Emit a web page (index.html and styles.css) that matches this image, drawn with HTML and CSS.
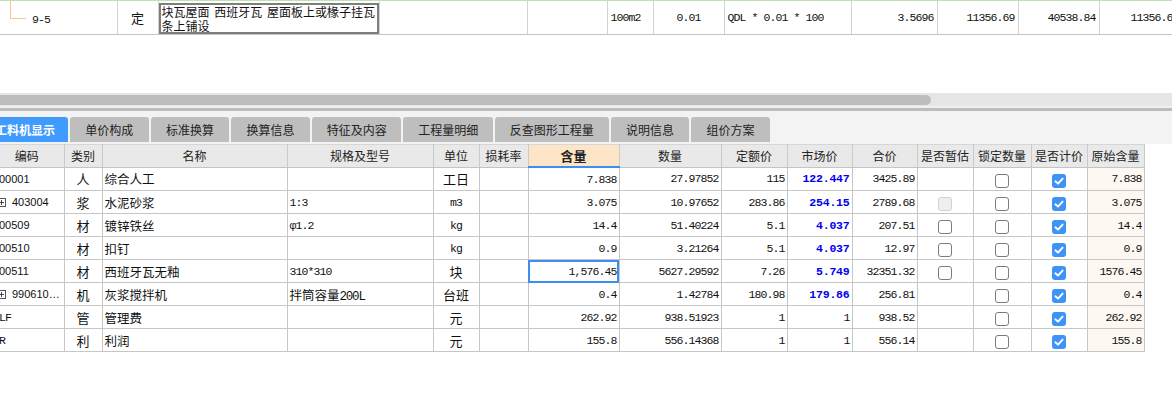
FILE: index.html
```html
<!DOCTYPE html>
<html lang="zh-CN">
<head>
<meta charset="utf-8">
<title>工料机显示</title>
<link rel="stylesheet" href="styles.css">
</head>
<body>
<div class="page">
  <table class="tgrid">
    <colgroup>
      <col style="width:117px"><col style="width:41px"><col style="width:221px"><col style="width:148px">
      <col style="width:80px"><col style="width:46px"><col style="width:71px"><col style="width:127px">
      <col style="width:86px"><col style="width:81px"><col style="width:81px"><col style="width:83px">
    </colgroup>
    <tr>
      <td class="treecell"><div class="tree"><span class="branch"></span><span class="code m">9-5</span></div></td>
      <td class="c cj">定</td>
      <td class="editcell"><div class="editbox"><div class="eline">块瓦屋面 西班牙瓦 屋面板上或椽子挂瓦</div><div class="eline">条上铺设</div></div></td>
      <td></td>
      <td></td>
      <td class="m">100m2</td>
      <td class="m c">0.01</td>
      <td class="m">QDL * 0.01 * 100</td>
      <td class="m r">3.5696</td>
      <td class="m r">11356.69</td>
      <td class="m r">40538.84</td>
      <td class="m r">11356.69</td>
    </tr>
  </table>

  <div class="hscroll"><div class="thumb"></div></div>
  <div class="hsep"></div>

  <div class="tabbar">
    <div class="tab active">工料机显示</div>
    <div class="tab">单价构成</div>
    <div class="tab">标准换算</div>
    <div class="tab">换算信息</div>
    <div class="tab wide">特征及内容</div>
    <div class="tab wide">工程量明细</div>
    <div class="tab wide">反查图形工程量</div>
    <div class="tab">说明信息</div>
    <div class="tab">组价方案</div>
  </div>

  <table class="grid">
    <colgroup>
      <col style="width:74px"><col style="width:38px"><col style="width:185px"><col style="width:146px">
      <col style="width:46px"><col style="width:49px"><col style="width:91px"><col style="width:102px">
      <col style="width:66px"><col style="width:65px"><col style="width:65px"><col style="width:56px">
      <col style="width:58px"><col style="width:56px"><col style="width:57px">
    </colgroup>
    <thead>
      <tr>
        <th class="h-code">编码</th><th>类别</th><th>名称</th><th>规格及型号</th><th>单位</th><th>损耗率</th>
        <th class="h-sel">含量</th><th>数量</th><th>定额价</th><th>市场价</th><th>合价</th>
        <th>是否暂估</th><th>锁定数量</th><th>是否计价</th><th>原始含量</th>
      </tr>
    </thead>
    <tbody>
      <tr>
        <td class="code-c sans">00001</td><td class="c cat">人</td><td class="name">综合人工</td><td class="spec"></td><td class="c cat">工日</td><td></td>
        <td class="m r">7.838</td><td class="m r">27.97852</td><td class="m r">115</td><td class="m r blue">122.447</td><td class="m r">3425.89</td>
        <td class="c"></td><td class="c"><span class="cb"></span></td><td class="c"><span class="cb on"></span></td><td class="m r orig">7.838</td>
      </tr>
      <tr>
        <td class="code-c sans"><span class="exp"></span>403004</td><td class="c cat">浆</td><td class="name">水泥砂浆</td><td class="spec m">1:3</td><td class="c m">m3</td><td></td>
        <td class="m r">3.075</td><td class="m r">10.97652</td><td class="m r">283.86</td><td class="m r blue">254.15</td><td class="m r">2789.68</td>
        <td class="c"><span class="cb dis"></span></td><td class="c"><span class="cb"></span></td><td class="c"><span class="cb on"></span></td><td class="m r orig">3.075</td>
      </tr>
      <tr>
        <td class="code-c sans">00509</td><td class="c cat">材</td><td class="name">镀锌铁丝</td><td class="spec m">φ1.2</td><td class="c m">kg</td><td></td>
        <td class="m r">14.4</td><td class="m r">51.40224</td><td class="m r">5.1</td><td class="m r blue">4.037</td><td class="m r">207.51</td>
        <td class="c"><span class="cb"></span></td><td class="c"><span class="cb"></span></td><td class="c"><span class="cb on"></span></td><td class="m r orig">14.4</td>
      </tr>
      <tr>
        <td class="code-c sans">00510</td><td class="c cat">材</td><td class="name">扣钉</td><td class="spec"></td><td class="c m">kg</td><td></td>
        <td class="m r">0.9</td><td class="m r">3.21264</td><td class="m r">5.1</td><td class="m r blue">4.037</td><td class="m r">12.97</td>
        <td class="c"><span class="cb"></span></td><td class="c"><span class="cb"></span></td><td class="c"><span class="cb on"></span></td><td class="m r orig">0.9</td>
      </tr>
      <tr>
        <td class="code-c sans">00511</td><td class="c cat">材</td><td class="name">西班牙瓦无釉</td><td class="spec m">310*310</td><td class="c cat">块</td><td></td>
        <td class="m r selected">1,576.45</td><td class="m r">5627.29592</td><td class="m r">7.26</td><td class="m r blue">5.749</td><td class="m r">32351.32</td>
        <td class="c"><span class="cb"></span></td><td class="c"><span class="cb"></span></td><td class="c"><span class="cb on"></span></td><td class="m r orig">1576.45</td>
      </tr>
      <tr>
        <td class="code-c sans"><span class="exp"></span>990610…</td><td class="c cat">机</td><td class="name">灰浆搅拌机</td><td class="spec">拌筒容量<span class="m big">200L</span></td><td class="c cat">台班</td><td></td>
        <td class="m r">0.4</td><td class="m r">1.42784</td><td class="m r">180.98</td><td class="m r blue">179.86</td><td class="m r">256.81</td>
        <td class="c"></td><td class="c"><span class="cb"></span></td><td class="c"><span class="cb on"></span></td><td class="m r orig">0.4</td>
      </tr>
      <tr>
        <td class="code-c m">LF</td><td class="c cat">管</td><td class="name">管理费</td><td class="spec"></td><td class="c cat">元</td><td></td>
        <td class="m r">262.92</td><td class="m r">938.51923</td><td class="m r">1</td><td class="m r">1</td><td class="m r">938.52</td>
        <td class="c"></td><td class="c"><span class="cb"></span></td><td class="c"><span class="cb on"></span></td><td class="m r orig">262.92</td>
      </tr>
      <tr>
        <td class="code-c m">R</td><td class="c cat">利</td><td class="name">利润</td><td class="spec"></td><td class="c cat">元</td><td></td>
        <td class="m r">155.8</td><td class="m r">556.14368</td><td class="m r">1</td><td class="m r">1</td><td class="m r">556.14</td>
        <td class="c"></td><td class="c"><span class="cb"></span></td><td class="c"><span class="cb on"></span></td><td class="m r orig">155.8</td>
      </tr>
    </tbody>
  </table>
</div>
</body>
</html>
```

FILE: styles.css
```css
html, body {
  margin: 0;
  padding: 0;
  background: #ffffff;
}
body {
  width: 1172px;
  height: 413px;
  overflow: hidden;
  font-family: "Noto Sans CJK SC", "Noto Sans", sans-serif;
  font-size: 12px;
  color: #111;
}
.page {
  width: 1172px;
  overflow: hidden;
}

/* generic cell helpers */
.m {
  font-family: "Liberation Mono", "Noto Sans CJK SC", monospace;
  font-size: 11.5px;
  letter-spacing: -0.9px;
}
.sans {
  font-family: "Liberation Sans", sans-serif;
  font-size: 11px;
}
.c { text-align: center; }
.r { text-align: right; }
.cj { font-size: 13px; }

/* ---------- top grid row ---------- */
.tgrid {
  border-collapse: collapse;
  table-layout: fixed;
  width: 1182px;
  border-top: 1px solid #bfe2b1;
}
.tgrid td {
  height: 33px;
  padding: 0 3px;
  border-left: 1px solid #d2d2d2;
  border-right: 1px solid #d2d2d2;
  border-bottom: 1px solid #c4c4c4;
  vertical-align: middle;
  white-space: nowrap;
  overflow: hidden;
}
.tgrid td:first-child { border-left: none; }
.tgrid .treecell {
  padding: 0;
  vertical-align: top;
}
.tree {
  display: flex;
  align-items: flex-start;
  height: 33px;
}
.branch {
  width: 15px;
  height: 17px;
  margin-left: 10px;
  border-left: 1px solid #f6c98c;
  border-bottom: 1px solid #f6c98c;
}
.code {
  margin-top: 12px;
  margin-left: 6px;
}
.tgrid .editcell {
  padding: 0;
  vertical-align: top;
}
.editbox {
  box-sizing: border-box;
  height: 31px;
  margin-top: 2px;
  border: 2px solid #7e7e7e;
  padding: 0 1px;
  font-size: 12px;
  word-spacing: 2px;
  white-space: nowrap;
  overflow: hidden;
  background: #fff;
}
.eline {
  height: 13.5px;
  line-height: 14px;
}

/* ---------- horizontal scroll ---------- */
.hscroll {
  margin-top: 58px;
  height: 15px;
  box-sizing: border-box;
  padding-top: 2px;
  background: #e6e6e6;
  border-bottom: 2px solid #f0f0f0;
}
.thumb {
  width: 931px;
  height: 10px;
  background: #bdbdbd;
  border-radius: 0 6px 6px 0;
}
.hsep {
  height: 3px;
  background: #bdbdbd;
}

/* ---------- tabs ---------- */
.tabbar {
  display: flex;
  align-items: flex-end;
  gap: 2px;
  height: 33px;
  box-sizing: border-box;
  padding: 6px 0 2px 0;
  margin-left: -20px;
  background: #f3f3f3;
}
.tab {
  height: 25px;
  line-height: 25px;
  padding: 0 15.3px;
  background: #bebebe;
  color: #222;
  font-size: 12px;
  border-radius: 3px 3px 0 0;
  white-space: nowrap;
}
.tab.wide {
  padding: 0 14.8px;
}
.tab.active {
  background: #3f9bfd;
  color: #fff;
  font-weight: bold;
  font-size: 12px;
  padding: 0 13px 0 15px;
}

/* ---------- main grid ---------- */
.grid {
  border-collapse: collapse;
  table-layout: fixed;
  width: 1154px;
  margin-left: -10px;
}
.grid th {
  height: 21px;
  padding: 0;
  background: #e9e9e9;
  border-top: 1px solid #d6d6d6;
  border-right: 1px solid #cacaca;
  border-bottom: 1px solid #c4c4c4;
  font-weight: normal;
  font-size: 12px;
  color: #222;
  text-align: center;
  white-space: nowrap;
  overflow: hidden;
}
.grid th.h-sel {
  background: #fde5c7;
  font-weight: bold;
  font-size: 13px;
  border-bottom: 2px solid #3d8ef0;
}
.grid td {
  height: 22px;
  padding: 0 3px;
  border: 1px solid #c6c6c6;
  white-space: nowrap;
  overflow: hidden;
  vertical-align: middle;
}
.grid td:first-child { border-left: none; }
.grid td.code-c {
  padding-left: 9px;
}
.grid td.cat {
  font-size: 13px;
}
.grid td.name {
  font-size: 12.5px;
  padding-left: 2px;
}
.grid td.spec {
  font-size: 12.5px;
  padding-left: 2px;
}
.grid td.spec.m {
  font-size: 11.5px;
}
.m.big {
  font-size: 12.5px;
  letter-spacing: -1.2px;
}
.grid td.r { padding-right: 2px; }
.grid td.orig {
  background: #fdf8f2;
}
.grid td.selected {
  outline: 2px solid #3d8ef0;
  outline-offset: -2px;
}
.blue {
  color: #0000ee;
  font-weight: bold;
  letter-spacing: -0.2px;
}
.exp {
  display: inline-block;
  box-sizing: border-box;
  width: 9px;
  height: 9px;
  margin-left: -2px;
  margin-right: 6px;
  border: 1px solid #555;
  vertical-align: -1px;
  background:
    linear-gradient(#444, #444) center / 5px 1px no-repeat,
    linear-gradient(#444, #444) center / 1px 5px no-repeat;
}

/* checkboxes */
.cb {
  display: inline-block;
  box-sizing: border-box;
  width: 14px;
  height: 14px;
  border: 1px solid #7c7c7c;
  border-radius: 3px;
  background: #fff;
  vertical-align: middle;
}
.cb.dis {
  border-color: #d2d2d2;
  background: #efefef;
}
.cb.on {
  border: none;
  background:
    url("data:image/svg+xml;utf8,<svg xmlns='http://www.w3.org/2000/svg' width='14' height='14' viewBox='0 0 14 14'><path d='M3.4 7.3 L6 9.6 L10.6 4.6' fill='none' stroke='white' stroke-width='1.9' stroke-linecap='round' stroke-linejoin='round'/></svg>") center / 14px 14px no-repeat,
    #3d94f6;
}
```
